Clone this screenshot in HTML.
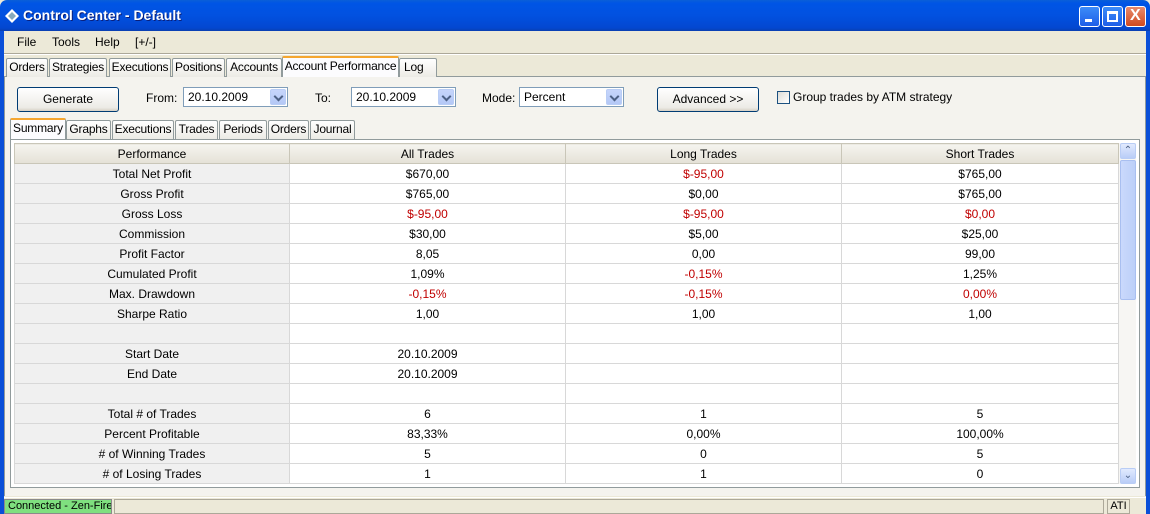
<!DOCTYPE html>
<html><head><style>
*{box-sizing:border-box;margin:0;padding:0}
body{width:1150px;height:514px;overflow:hidden;background:#ece9d8;font-family:"Liberation Sans Narrow","Liberation Sans",sans-serif;font-size:11px;color:#000;position:relative}
.abs{position:absolute;white-space:nowrap}
#title{left:0;top:0;width:1150px;height:31px;background:linear-gradient(#0a5fd8,#0055e5 10%,#0251e0 50%,#0347d0 90%,#0a3fb0);border-radius:7px 7px 0 0}
#title span{position:absolute;left:23px;top:7px;color:#fff;font-family:"Liberation Sans",sans-serif;font-weight:bold;font-size:14px;text-shadow:1px 1px #0a1e78}
.wb{position:absolute;top:6px;width:21px;height:21px;border:1px solid #fff;border-radius:3px;background:linear-gradient(#3c8cf8,#1e5ee8)}
#lb{left:0;top:31px;width:4px;height:483px;background:#0a4fd8}
#rb{right:0;top:31px;width:4px;height:483px;background:#0a4fd8}
.tab{position:absolute;white-space:nowrap;height:19px;border:1px solid #919b9c;border-bottom:none;border-radius:2px 2px 0 0;background:linear-gradient(#fff,#ecebe5);text-align:center;line-height:17px;font-size:12px;letter-spacing:-0.2px}
.tab.sel{background:#fcfcfe;border-top:2px solid #f5a630;height:21px}
.btn{position:absolute;border:1px solid #003c74;border-radius:3px;background:linear-gradient(#fff,#ecebe6 85%,#d6d0c5);text-align:center;font-size:12px}
.cb{position:absolute;height:20px;border:1px solid #7f9db9;background:#fff;font-size:12px;padding-left:4px;line-height:18px}
.cb i{position:absolute;right:1px;top:1px;width:16px;height:16px;background:linear-gradient(#c6d5fb,#b4c8f6);border-radius:2px;border:1px solid #b9cdf5}
.cb i:after{content:"";position:absolute;left:4px;top:3px;width:5px;height:5px;border-right:2px solid #4d6185;border-bottom:2px solid #4d6185;transform:rotate(45deg)}
table{border-collapse:collapse;position:absolute;left:14px;top:143px;table-layout:fixed}
td{height:20px;border:1px solid #d8d8d8;text-align:center;font-size:12px;padding:0;overflow:hidden;white-space:nowrap}
td.p{background:#f0f0f0}
tr.h td{background:linear-gradient(#f5f4ef,#e4e1d6);border-color:#c9c6b8}
.r{color:#c00000}
</style></head><body>
<div id="title" class="abs"><svg style="position:absolute;left:5px;top:9px" width="14" height="14"><path d="M7 0L14 7L7 14L0 7Z" fill="#fff"/><path d="M7 3L11 7L7 11L3 7Z" fill="#8ab"/></svg><span>Control Center - Default</span>
<div class="wb" style="left:1079px"><div style="position:absolute;left:5px;top:12px;width:7px;height:3px;background:#fff"></div></div>
<div class="wb" style="left:1102px"><div style="position:absolute;left:4px;top:4px;width:11px;height:11px;border:2px solid #fff;border-top-width:3px"></div></div>
<div class="wb" style="left:1125px;background:linear-gradient(#e88a6c,#d04a20)"><span style="left:4px;top:0px;font-size:16px;text-shadow:none;font-weight:bold">X</span></div>
</div>
<div id="lb" class="abs"></div><div id="rb" class="abs"></div>
<div class="abs" style="left:17px;top:35px;font-size:12px">File</div>
<div class="abs" style="left:52px;top:35px;font-size:12px">Tools</div>
<div class="abs" style="left:95px;top:35px;font-size:12px">Help</div>
<div class="abs" style="left:135px;top:35px;font-size:12px">[+/-]</div>
<div class="abs" style="left:4px;top:53px;width:1142px;height:2px;border-top:1px solid #aca899;border-bottom:1px solid #fff"></div>
<div class="abs" style="left:4px;top:76px;width:1142px;height:420px;border:1px solid #919b9c;border-bottom:none;background:#f4f3ee"></div>
<div class="tab" style="left:6px;top:58px;width:42px">Orders</div>
<div class="tab" style="left:49px;top:58px;width:58px">Strategies</div>
<div class="tab" style="left:109px;top:58px;width:62px">Executions</div>
<div class="tab" style="left:172px;top:58px;width:53px">Positions</div>
<div class="tab" style="left:226px;top:58px;width:56px">Accounts</div>
<div class="tab sel" style="left:282px;top:56px;width:117px">Account Performance</div>
<div class="tab" style="left:399px;top:58px;width:38px;text-align:left;padding-left:4px">Log</div>
<div class="btn" style="left:17px;top:87px;width:102px;height:25px;line-height:23px">Generate</div>
<div class="abs" style="left:146px;top:91px;font-size:12px">From:</div>
<div class="cb" style="left:183px;top:87px;width:105px">20.10.2009<i></i></div>
<div class="abs" style="left:315px;top:91px;font-size:12px">To:</div>
<div class="cb" style="left:351px;top:87px;width:105px">20.10.2009<i></i></div>
<div class="abs" style="left:482px;top:91px;font-size:12px">Mode:</div>
<div class="cb" style="left:519px;top:87px;width:105px">Percent<i></i></div>
<div class="btn" style="left:657px;top:87px;width:102px;height:25px;line-height:23px">Advanced &gt;&gt;</div>
<div class="abs" style="left:777px;top:91px;width:13px;height:13px;border:1px solid #1c5180;background:linear-gradient(135deg,#dcdcd7,#fff)"></div>
<div class="abs" style="left:793px;top:90px;font-size:12px">Group trades by ATM strategy</div>
<div class="tab sel" style="left:10px;top:118px;width:56px">Summary</div>
<div class="tab" style="left:66px;top:120px;width:45px">Graphs</div>
<div class="tab" style="left:112px;top:120px;width:62px">Executions</div>
<div class="tab" style="left:175px;top:120px;width:43px">Trades</div>
<div class="tab" style="left:219px;top:120px;width:48px">Periods</div>
<div class="tab" style="left:268px;top:120px;width:41px">Orders</div>
<div class="tab" style="left:310px;top:120px;width:45px">Journal</div>
<div class="abs" style="left:10px;top:139px;width:1130px;height:349px;border:1px solid #919b9c;background:#fff"></div>
<table>
<colgroup><col style="width:275px"><col style="width:276px"><col style="width:276px"><col style="width:277px"></colgroup>
<tr class="h"><td>Performance</td><td>All Trades</td><td>Long Trades</td><td>Short Trades</td></tr>
<tr><td class="p">Total Net Profit</td><td>$670,00</td><td class="r">$-95,00</td><td>$765,00</td></tr>
<tr><td class="p">Gross Profit</td><td>$765,00</td><td>$0,00</td><td>$765,00</td></tr>
<tr><td class="p">Gross Loss</td><td class="r">$-95,00</td><td class="r">$-95,00</td><td class="r">$0,00</td></tr>
<tr><td class="p">Commission</td><td>$30,00</td><td>$5,00</td><td>$25,00</td></tr>
<tr><td class="p">Profit Factor</td><td>8,05</td><td>0,00</td><td>99,00</td></tr>
<tr><td class="p">Cumulated Profit</td><td>1,09%</td><td class="r">-0,15%</td><td>1,25%</td></tr>
<tr><td class="p">Max. Drawdown</td><td class="r">-0,15%</td><td class="r">-0,15%</td><td class="r">0,00%</td></tr>
<tr><td class="p">Sharpe Ratio</td><td>1,00</td><td>1,00</td><td>1,00</td></tr>
<tr><td class="p"></td><td></td><td></td><td></td></tr>
<tr><td class="p">Start Date</td><td>20.10.2009</td><td></td><td></td></tr>
<tr><td class="p">End Date</td><td>20.10.2009</td><td></td><td></td></tr>
<tr><td class="p"></td><td></td><td></td><td></td></tr>
<tr><td class="p">Total # of Trades</td><td>6</td><td>1</td><td>5</td></tr>
<tr><td class="p">Percent Profitable</td><td>83,33%</td><td>0,00%</td><td>100,00%</td></tr>
<tr><td class="p"># of Winning Trades</td><td>5</td><td>0</td><td>5</td></tr>
<tr><td class="p"># of Losing Trades</td><td>1</td><td>1</td><td>0</td></tr>
</table>
<div class="abs" style="left:1119px;top:143px;width:17px;height:341px;background:#f7f6f3"></div>
<div class="abs" style="left:1120px;top:143px;width:16px;height:16px;background:linear-gradient(#e1eafe,#b9cdf7);border:1px solid #b9cdf5;border-radius:2px;color:#4d6185;font-size:10px;text-align:center;line-height:14px">&#8963;</div>
<div class="abs" style="left:1120px;top:160px;width:16px;height:140px;background:linear-gradient(90deg,#cad9fc,#bccff8);border:1px solid #a9bff0;border-radius:2px"></div>
<div class="abs" style="left:1120px;top:468px;width:16px;height:16px;background:linear-gradient(#e1eafe,#b9cdf7);border:1px solid #b9cdf5;border-radius:2px;color:#4d6185;font-size:10px;text-align:center;line-height:14px">&#8964;</div>
<div class="abs" style="left:4px;top:497px;width:1142px;height:17px;border-top:1px solid #fff"></div>
<div class="abs" style="left:4px;top:499px;width:108px;height:15px;background:#7fe07f;border:1px solid #8a8a8a;font-size:11px;padding-left:3px;line-height:13px;overflow:hidden">Connected - Zen-Fire</div>
<div class="abs" style="left:114px;top:499px;width:990px;height:15px;border:1px solid #aca899"></div>
<div class="abs" style="left:1107px;top:499px;width:23px;height:15px;border:1px solid #aca899;font-size:11px;text-align:center;line-height:13px">ATI</div>
</body></html>
